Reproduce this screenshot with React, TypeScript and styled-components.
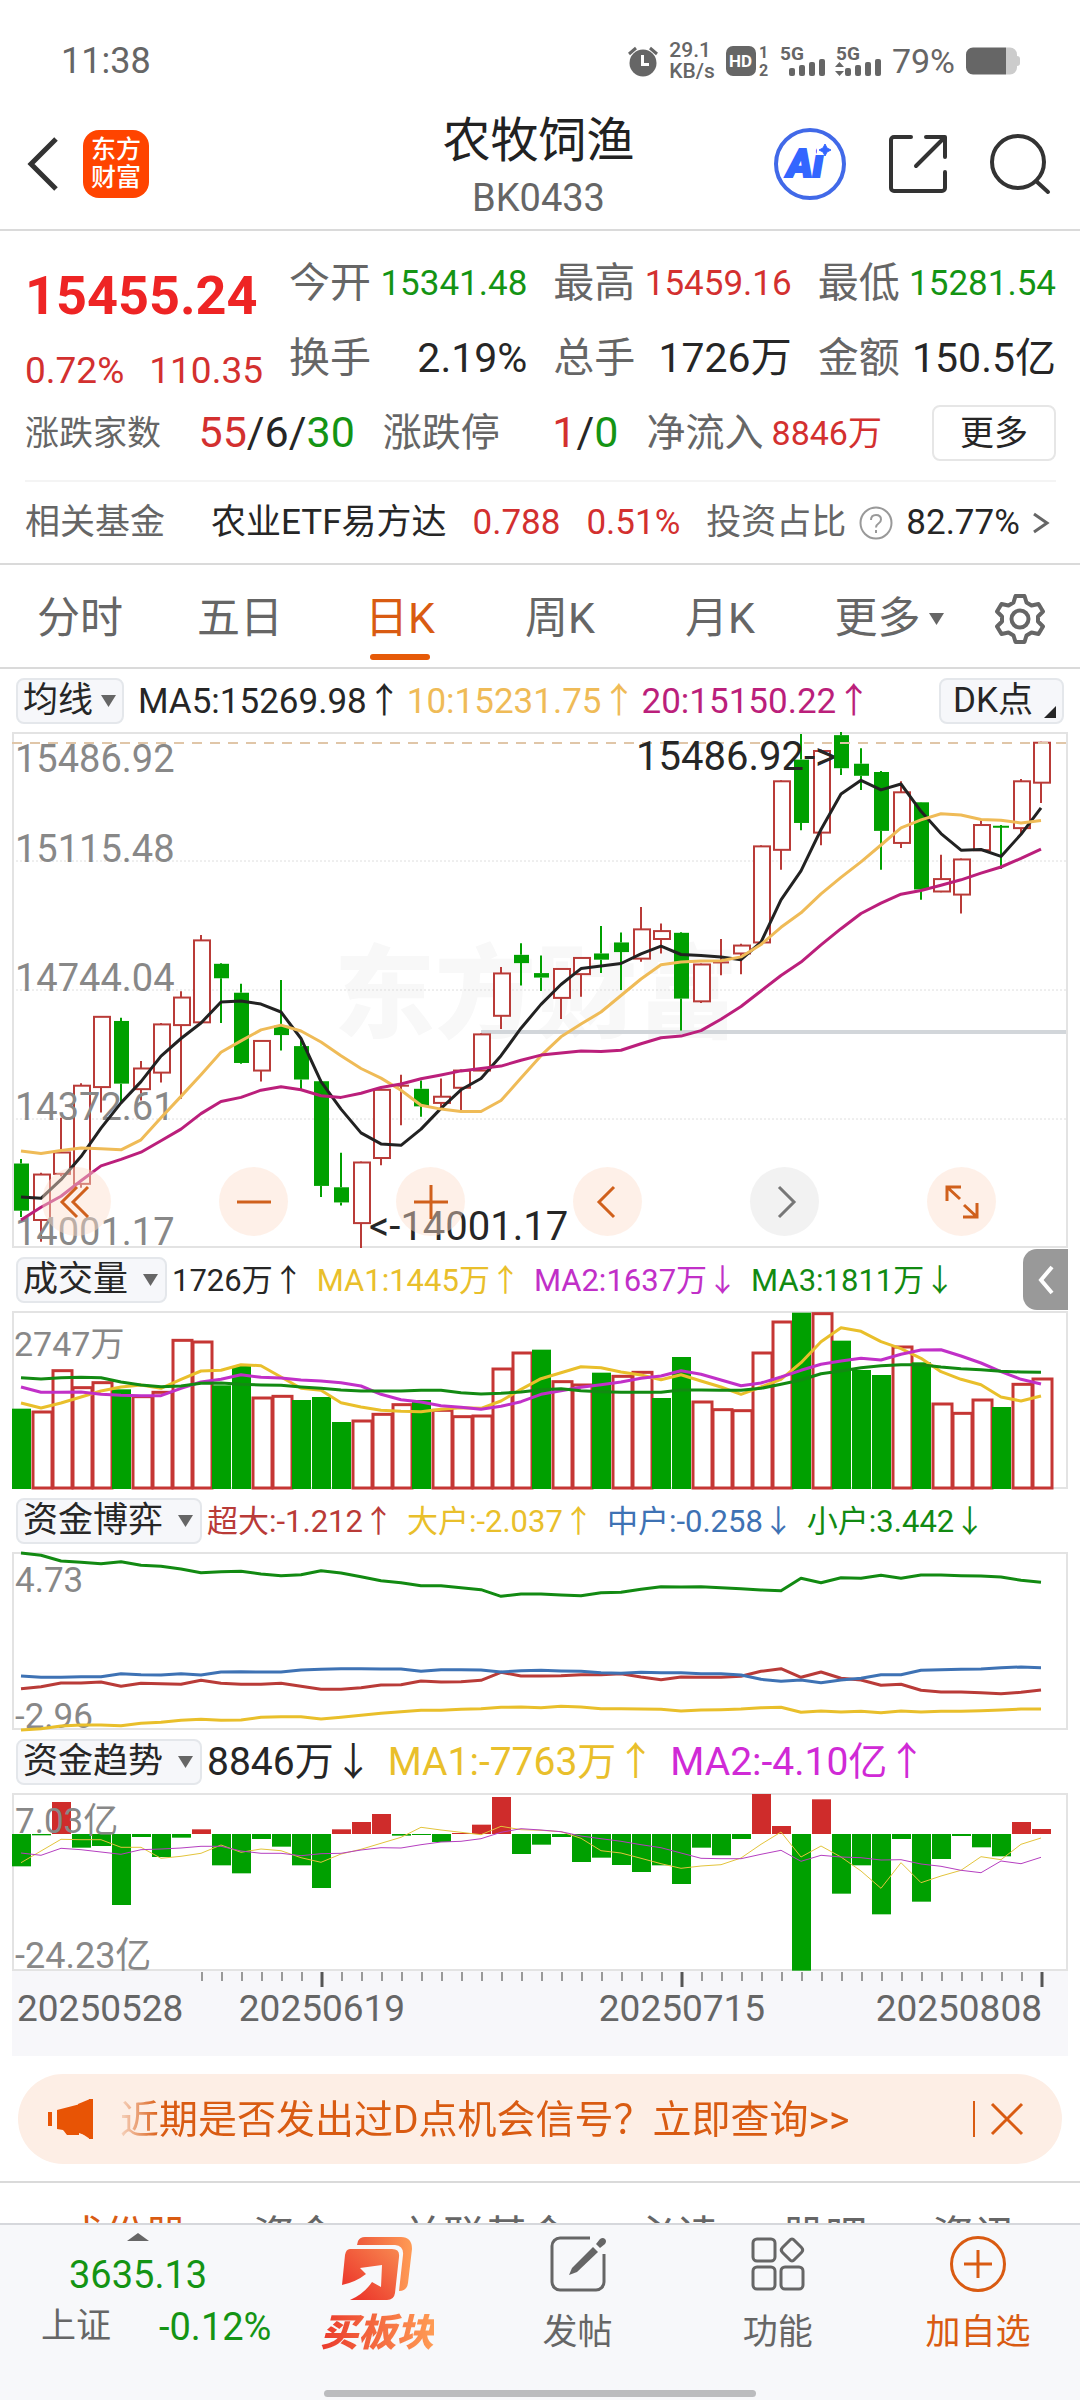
import React from "react";
import styled, { createGlobalStyle, css } from "styled-components";

const RED = "#d3302f";
const GREEN = "#149414";
const ORANGE = "#d95b12";
const GREY = "#666666";
const INK = "#262626";
const CANDLE_RED = "#b93b38";
const CANDLE_GREEN = "#00a000";

const FONT = 'Roboto, "Noto Sans CJK SC", sans-serif';

const GlobalStyle = createGlobalStyle`
  * { box-sizing: border-box; }
  body { margin: 0; background: #fff; font-family: ${FONT}; line-height: 1.2; color: ${INK}; }
  button, select { font-family: inherit; line-height: inherit; color: inherit; }
  button { border: 0; padding: 0; background: none; cursor: pointer; }
  h1, p, dl, dd, dt { margin: 0; font-weight: 400; }
  svg { display: block; flex: none; overflow: visible; }
`;

const Screen = styled.div`
  height: 100vh;
  display: flex;
  flex-direction: column;
  overflow: hidden;
`;

const Scroller = styled.main`
  flex: 1;
  min-height: 0;
  overflow: hidden;
`;

/* ---------- status bar ---------- */

const StatusBar = styled.div`
  display: flex;
  align-items: center;
  height: 84px;
  padding: 38px 60px 0 61px;
  color: ${GREY};
`;

const Clock = styled.span`
  flex: 1;
  font-size: 36px;
  line-height: 46px;
`;

const StatusIcons = styled.div`
  display: flex;
  align-items: center;
  gap: 11px;
`;

const NetSpeed = styled.span`
  display: grid;
  font-size: 21px;
  line-height: 21px;
  font-weight: 500;
`;

const Battery = styled.span`
  font-size: 34px;
  line-height: 46px;
`;

/* ---------- title bar ---------- */

const TitleBar = styled.header`
  display: grid;
  grid-template-columns: 1fr auto 1fr;
  align-items: center;
  height: 147px;
  padding: 14px 30px 0 27px;
  border-bottom: 2px solid #dadada;
`;

const BarSide = styled.div<{ $end?: boolean; $gap: number }>`
  display: flex;
  align-items: center;
  justify-content: ${(p) => (p.$end ? "flex-end" : "flex-start")};
  gap: ${(p) => p.$gap}px;
`;

const AppBadge = styled.a`
  display: grid;
  place-content: center;
  width: 66px;
  height: 68px;
  border-radius: 16px;
  background: #ff4400;
  color: #fff;
  font-size: 25px;
  line-height: 28px;
  font-weight: 500;
  text-decoration: none;
`;

const TitleBlock = styled.div`
  display: grid;
  justify-items: center;
  gap: 4px;
  padding-top: 2px;
`;

const Title = styled.h1`
  font-size: 48px;
  line-height: 62px;
  color: #222;
`;

const Code = styled.p`
  font-size: 38px;
  line-height: 44px;
  color: ${GREY};
`;

/* ---------- quote ---------- */

const Quote = styled.section`
  padding: 15px 24px 0 25px;
  border-bottom: 2px solid #dadada;
`;

const QuoteTop = styled.div`
  display: grid;
  grid-template-columns: 238px 1fr;
  column-gap: 26px;
`;

const Price = styled.p`
  font-size: 54px;
  line-height: 100px;
  font-weight: 700;
  color: #ee2424;
`;

const Change = styled.p`
  display: flex;
  justify-content: space-between;
  font-size: 37px;
  line-height: 50px;
  color: ${RED};
`;

const Metrics = styled.dl`
  display: grid;
  grid-template-columns: repeat(3, 1fr);
  grid-auto-rows: 75px;
  column-gap: 26px;
`;

const Breadth = styled.dl`
  display: grid;
  grid-template-columns: 7fr 5fr 5fr auto;
  column-gap: 28px;
  align-items: center;
  height: 74px;
`;

const Metric = styled.div`
  display: flex;
  align-items: center;
  justify-content: space-between;
  white-space: nowrap;
`;

const Label = styled.dt<{ $size: number }>`
  font-size: ${(p) => p.$size}px;
  color: ${GREY};
`;

const Value = styled.dd<{ $size: number; $color?: string }>`
  font-size: ${(p) => p.$size}px;
  color: ${(p) => p.$color ?? INK};
`;

const Tint = styled.span<{ $color: string }>`
  color: ${(p) => p.$color};
`;

const MoreButton = styled.button`
  width: 124px;
  height: 56px;
  margin-left: 22px;
  border: 2px solid #e6e6e6;
  border-radius: 8px;
  font-size: 34px;
`;

const FundRow = styled.div`
  display: flex;
  align-items: center;
  gap: 26px;
  height: 83px;
  margin-top: 10px;
  border-top: 2px solid #f4f4f4;
  font-size: 35px;
  white-space: nowrap;
`;

const FundGroup = styled.span<{ $gap: number; $color?: string; $push?: number }>`
  display: flex;
  align-items: center;
  gap: ${(p) => p.$gap}px;
  margin-right: ${(p) => p.$push ?? 0}px;
  color: ${(p) => p.$color ?? INK};
`;

/* ---------- period tabs ---------- */

const PeriodTabs = styled.nav`
  display: grid;
  grid-template-columns: repeat(6, 4fr) 3fr;
  height: 104px;
  border-bottom: 2px solid #dadada;
`;

const PeriodTab = styled.button<{ $active?: boolean; $more?: boolean }>`
  position: relative;
  display: flex;
  align-items: center;
  justify-content: center;
  gap: 8px;
  padding: 6px 0 0 ${(p) => (p.$more ? 18 : 0)}px;
  font-size: 43px;
  color: ${(p) => (p.$active ? ORANGE : GREY)};
  ${(p) =>
    p.$active &&
    css`
      &::after {
        content: "";
        position: absolute;
        left: 50%;
        bottom: 7px;
        width: 60px;
        height: 6px;
        margin-left: -30px;
        border-radius: 3px;
        background: #e65a08;
      }
    `}
`;

/* ---------- chart panels ---------- */

const Charts = styled.section`
  padding: 0 12px;
`;

const Legend = styled.div<{ $gap: number; $size: number }>`
  position: relative;
  display: flex;
  align-items: center;
  gap: ${(p) => p.$gap}px;
  height: 63px;
  padding: 0 4px;
  font-size: ${(p) => p.$size}px;
  white-space: nowrap;
`;

const Picker = styled.label<{ $wide?: boolean }>`
  position: relative;
  display: flex;
  align-items: center;
  svg {
    position: absolute;
    right: ${(p) => (p.$wide ? 9 : 8)}px;
    pointer-events: none;
  }
`;

const PickerSelect = styled.select<{ $wide?: boolean }>`
  appearance: none;
  height: 46px;
  margin: 0;
  padding: 0 ${(p) => (p.$wide ? 36 : 28)}px 0 5px;
  border: 2px solid #e4e7eb;
  border-radius: 8px;
  background: #f6f7fa;
  font-size: 35px;
  line-height: 42px;
`;

const LegendItems = styled.div<{ $gap: number }>`
  display: flex;
  flex: 1;
  gap: ${(p) => p.$gap}px;
  padding-top: 2px;
`;

const DkButton = styled.button`
  display: flex;
  align-items: center;
  gap: 11px;
  height: 46px;
  padding: 0 6px 0 12px;
  border: 2px solid #e4e7eb;
  border-radius: 8px;
  background: #f6f7fa;
  font-size: 35px;
  svg {
    align-self: flex-end;
    margin-bottom: 4px;
  }
`;

const Drawer = styled.button`
  position: absolute;
  right: 0;
  bottom: 1px;
  display: grid;
  place-items: center;
  width: 45px;
  height: 61px;
  border-radius: 14px 0 0 14px;
  background: #999;
`;

const Plot = styled.svg`
  width: 100%;
  height: auto;
  text {
    font-family: ${FONT};
  }
`;

const MainPlot = styled.div`
  position: relative;
`;

const Controls = styled.div`
  position: absolute;
  left: 30px;
  right: 72px;
  bottom: 12px;
  display: flex;
  justify-content: space-between;
`;

const RoundButton = styled.button<{ $muted?: boolean }>`
  display: grid;
  place-items: center;
  width: 69px;
  height: 69px;
  border-radius: 50%;
  background: ${(p) => (p.$muted ? "rgba(230, 230, 230, 0.5)" : "rgba(253, 222, 205, 0.45)")};
`;

/* ---------- notice ---------- */

const Notice = styled.aside`
  display: flex;
  align-items: center;
  height: 90px;
  margin: 18px 18px 17px;
  padding: 0 39px 0 30px;
  border-radius: 45px;
  background: #fdeee5;
  color: ${ORANGE};
`;

const NoticeLink = styled.a`
  flex: 1;
  margin-left: 18px;
  padding: 2px 0 0 8px;
  color: inherit;
  font-size: 39px;
  text-decoration: none;
  white-space: nowrap;
  overflow: hidden;
  mask-image: linear-gradient(to right, transparent, #000 48px);
`;

const NoticeClose = styled.button`
  display: flex;
  align-items: center;
  height: 36px;
  padding-left: 16px;
  border-left: 2px solid ${ORANGE};
`;

const SectionTabs = styled.nav`
  display: flex;
  justify-content: space-between;
  padding: 28px 64px 24px 62px;
  border-top: 2px solid #dadada;
`;

const SectionTab = styled.button<{ $active?: boolean }>`
  font-size: 42px;
  line-height: 52px;
  color: ${(p) => (p.$active ? ORANGE : GREY)};
`;

/* ---------- bottom bar ---------- */

const BottomBar = styled.footer`
  position: relative;
  flex: none;
  display: grid;
  grid-template-columns: 277fr repeat(4, 200fr);
  height: 177px;
  padding-right: 2px;
  border-top: 2px solid #d6d8dc;
  background: #f7f8fa;
`;

const IndexButton = styled.button`
  display: flex;
  flex-direction: column;
  align-items: flex-start;
  padding: 8px 0 0 41px;
  color: ${GREEN};
  font-size: 38px;
  line-height: 52px;
  svg {
    margin: 0 0 8px 86px;
  }
`;

const IndexValue = styled.span`
  margin-left: 28px;
`;

const IndexChange = styled.span`
  display: flex;
  gap: 48px;
`;

const IndexName = styled.span`
  color: ${GREY};
  font-size: 35px;
`;

const NavButton = styled.button<{ $color?: string }>`
  display: flex;
  flex-direction: column;
  align-items: center;
  padding-top: 11px;
  font-size: 35px;
  line-height: 48px;
  color: ${(p) => p.$color ?? GREY};
`;

const NavIcon = styled.span`
  height: 66px;
  margin-bottom: 7px;
`;

const BuyLabel = styled.span`
  font-size: 38px;
  font-weight: 900;
  font-style: italic;
  background: linear-gradient(to right, #ea3a2c, #ff9c54);
  background-clip: text;
  color: transparent;
`;

const HomeIndicator = styled.div`
  position: absolute;
  left: 30%;
  right: 30%;
  bottom: 3px;
  height: 7px;
  border-radius: 4px;
  background: #bbbcbe;
`;

/* ---------- data ---------- */

type Candle = [up: 0 | 1, high: number, top: number, bottom: number, low: number];

const CANDLES: Candle[] = [
  [0, 1275, 1288, 1425, 1443], [1, 1315, 1320, 1452, 1515], [1, 1155, 1256, 1318, 1325],
  [1, 1055, 1062, 1347, 1358], [1, 860, 862, 1066, 1140], [0, 865, 874, 1056, 1110],
  [1, 990, 1012, 1072, 1105], [1, 880, 884, 1024, 1053], [1, 788, 806, 886, 1100],
  [1, 624, 640, 878, 880], [0, 706, 708, 750, 880], [0, 766, 792, 996, 998],
  [1, 929, 932, 1018, 1050], [0, 755, 888, 915, 960], [0, 930, 947, 1044, 1072],
  [0, 1045, 1049, 1353, 1385], [0, 1257, 1357, 1401, 1410], [1, 1282, 1285, 1461, 1533],
  [1, 1070, 1074, 1272, 1293], [1, 1030, 1062, 1062, 1177], [0, 1047, 1071, 1122, 1152],
  [1, 1041, 1094, 1112, 1125], [1, 1015, 1018, 1068, 1133], [1, 910, 913, 1018, 1018],
  [1, 717, 736, 859, 897], [0, 648, 682, 706, 771], [0, 684, 735, 748, 787],
  [1, 720, 723, 807, 868], [1, 688, 691, 738, 804], [0, 598, 678, 696, 735],
  [0, 617, 646, 674, 784], [1, 543, 608, 693, 702], [1, 591, 613, 636, 678],
  [0, 616, 618, 809, 902], [1, 707, 710, 817, 822], [1, 636, 704, 704, 741],
  [1, 650, 655, 678, 738], [1, 364, 367, 646, 648], [1, 175, 178, 377, 435],
  [0, 41, 115, 299, 320], [1, 86, 90, 327, 364], [0, 35, 44, 140, 160],
  [0, 82, 127, 162, 203], [0, 148, 151, 322, 435], [1, 178, 210, 357, 372],
  [0, 238, 239, 492, 522], [1, 391, 462, 498, 500], [1, 402, 405, 507, 562],
  [1, 292, 305, 378, 380], [0, 305, 310, 310, 433], [1, 171, 178, 314, 332],
  [1, 63, 66, 182, 241],
];

const MA5 = [
  1385, 1389, 1335, 1268, 1185, 1112, 1050, 976, 925, 880, 819, 816, 825, 848, 925, 1050, 1130,
  1199, 1231, 1235, 1188, 1128, 1074, 1041, 975, 895, 826, 768, 722, 714, 707, 679, 657, 681,
  684, 688, 696, 645, 522, 438, 318, 215, 175, 203, 186, 265, 330, 378, 376, 396, 332, 255,
];
const MA10 = [
  1252, 1259, 1250, 1243, 1245, 1248, 1219, 1155, 1093, 1030, 965, 932, 900, 886, 903, 935, 975,
  1012, 1040, 1075, 1119, 1130, 1137, 1137, 1105, 1040, 975, 920, 883, 848, 800, 752, 711, 703,
  700, 699, 688, 652, 602, 560, 505, 457, 412, 363, 313, 290, 272, 276, 289, 291, 299, 292,
];
const MA20 = [
  1452, 1415, 1383, 1338, 1295, 1276, 1255, 1222, 1188, 1143, 1108, 1096, 1075, 1065, 1074, 1091,
  1096, 1084, 1067, 1057, 1042, 1031, 1019, 1012, 1005, 988, 973, 967, 961, 963, 959, 940, 923,
  918, 902, 869, 832, 787, 742, 703, 653, 606, 562, 532, 506, 495, 480, 464, 445, 427, 402, 375,
];

const VOLUME = [
  473, 480, 356, 407, 392, 415, 434, 421, 265, 270, 403, 345, 438, 433, 447, 438, 513, 507, 487,
  458, 447, 475, 494, 492, 351, 303, 296, 389, 399, 365, 373, 361, 441, 318, 450, 473, 476, 303,
  210, 185, 185, 269, 357, 372, 285, 334, 456, 484, 444, 468, 397, 381,
];
const VOLUME_DOWN = new Set([0, 5, 10, 11, 14, 15, 16, 20, 26, 29, 32, 33, 39, 41, 42, 43, 45, 49]);
const VOL_MA1 = [
  456, 471, 456, 438, 420, 408, 402, 412, 385, 360, 358, 341, 344, 378, 412, 418, 455, 468, 478,
  481, 482, 475, 470, 472, 450, 415, 383, 365, 347, 350, 363, 372, 386, 371, 390, 408, 430, 408,
  385, 335, 272, 230, 241, 272, 293, 322, 362, 385, 401, 438, 450, 435,
];
const VOL_MA2 = [
  408, 424, 424, 423, 430, 433, 434, 434, 412, 393, 385, 371, 379, 381, 387, 390, 395, 405, 430,
  446, 453, 464, 469, 475, 466, 452, 430, 419, 409, 401, 393, 382, 375, 359, 370, 387, 404, 396,
  378, 358, 340, 330, 322, 327, 310, 297, 296, 315, 336, 362, 385, 399,
];
const VOL_MA3 = [
  380, 384, 380, 379, 380, 393, 402, 407, 405, 397, 396, 400, 402, 403, 408, 412, 417, 420, 420,
  420, 418, 418, 425, 429, 427, 423, 416, 413, 419, 422, 424, 424, 424, 417, 417, 418, 418, 412,
  400, 387, 368, 360, 350, 344, 341, 341, 348, 353, 356, 361, 363, 364,
];

const FLOW_SMALL = [
  186, 193, 210, 214, 218, 212, 223, 226, 234, 245, 242, 241, 249, 254, 251, 239, 246, 257, 269,
  275, 284, 284, 290, 296, 316, 309, 309, 312, 314, 305, 304, 295, 287, 288, 287, 290, 293, 297,
  299, 262, 275, 260, 262, 253, 262, 252, 252, 254, 255, 258, 268, 274,
];
const FLOW_MEDIUM = [
  555, 559, 559, 557, 557, 548, 551, 552, 548, 552, 543, 542, 543, 543, 537, 535, 533, 533, 534,
  534, 541, 536, 536, 537, 543, 539, 538, 540, 541, 545, 547, 544, 545, 545, 548, 548, 552, 565,
  571, 567, 575, 567, 562, 551, 551, 538, 536, 535, 534, 530, 528, 530,
];
const FLOW_HUGE = [
  593, 587, 576, 576, 573, 586, 577, 578, 580, 568, 577, 580, 580, 577, 586, 595, 595, 590, 582,
  581, 570, 573, 572, 568, 544, 555, 555, 554, 551, 551, 548, 558, 566, 558, 559, 559, 556, 541,
  533, 559, 543, 562, 567, 583, 580, 598, 603, 603, 605, 608, 604, 597,
];
const FLOW_LARGE = [
  717, 713, 705, 702, 702, 704, 697, 694, 688, 685, 688, 687, 679, 677, 677, 684, 679, 673, 667,
  662, 658, 658, 655, 653, 649, 648, 650, 646, 648, 653, 653, 654, 655, 660, 657, 656, 654, 650,
  649, 664, 660, 663, 661, 665, 660, 663, 661, 661, 659, 657, 654, 654,
];

const TREND = [
  406, 313, 213, 350, 345, 522, 318, 378, 320, 295, 403, 427, 324, 347, 403, 471, 295, 273, 249,
  314, 312, 333, 306, 281, 198, 369, 341, 318, 393, 380, 402, 423, 403, 459, 350, 373, 324, 189,
  285, 719, 205, 488, 403, 550, 324, 512, 384, 315, 349, 376, 273, 294,
];
const TREND_MA1 = [
  395, 360, 325, 326, 326, 349, 349, 382, 376, 367, 342, 364, 354, 359, 380, 394, 369, 355, 337,
  319, 289, 297, 304, 311, 286, 296, 298, 302, 322, 359, 366, 382, 398, 412, 405, 401, 381, 340,
  303, 378, 345, 378, 420, 472, 395, 455, 435, 418, 377, 386, 340, 321,
];
const TREND_MA2 = [
  366, 373, 352, 356, 363, 370, 356, 354, 351, 346, 346, 360, 367, 367, 374, 368, 367, 357, 350,
  351, 341, 333, 331, 323, 304, 293, 297, 302, 315, 323, 331, 341, 350, 366, 382, 383, 383, 370,
  358, 391, 373, 378, 380, 387, 386, 399, 406, 418, 425, 390, 398, 379,
];
const TREND_ZERO = 309;

/* ---------- chart helpers ---------- */

const xOf = (i: number) => 9 + i * 20;
const priceY = (v: number) => v / 2.904 - 12;
const volumeY = (v: number) => v / 3 - 60;
const flowY = (v: number) => v / 3 - 61;
const trendY = (v: number) => v / 3 - 62;

type LineProps = { data: number[]; y: (v: number) => number; color: string; width?: number };

const Line = ({ data, y, color, width = 3 }: LineProps) => (
  <polyline
    points={data.map((v, i) => `${xOf(i)},${y(v).toFixed(1)}`).join(" ")}
    fill="none"
    stroke={color}
    strokeWidth={width}
    strokeLinejoin="round"
  />
);

const Frame = ({ height }: { height: number }) => (
  <rect x="1" y="1" width="1054" height={height - 2} fill="none" stroke="#e3e3e3" strokeWidth="2" />
);

const AxisText = ({ x = 3, y, size = 38, children }: { x?: number; y: number; size?: number; children: string }) => (
  <text x={x} y={y} fontSize={size} fill="#888">
    {children}
  </text>
);

const CandleChart = () => (
  <Plot viewBox="0 0 1056 516" role="img" aria-label="日K线">
    <text x="322" y="298" fontSize="101" fontWeight="900" fill="#f8f8f8">
      东方财富
    </text>
    {[129, 258, 387].map((y) => (
      <line key={y} x1="0" x2="1056" y1={y} y2={y} stroke="#dedede" strokeWidth="1" strokeDasharray="2 2" />
    ))}
    <Frame height={516} />
    <line x1="469" x2="1054" y1="300" y2="300" stroke="#d2d6da" strokeWidth="4" />
    {CANDLES.map(([up, high, top, bottom, low], i) => {
      const x = xOf(i);
      const color = up ? CANDLE_RED : CANDLE_GREEN;
      const t = priceY(top);
      const b = priceY(bottom);
      return (
        <g key={i} stroke={color} strokeWidth="2">
          <line x1={x} x2={x} y1={Math.max(priceY(high), 0)} y2={t} />
          <line x1={x} x2={x} y1={b} y2={priceY(low)} />
          {top === bottom ? (
            <line x1={x - 8} x2={x + 8} y1={t} y2={t} />
          ) : up ? (
            <rect x={x - 7} y={t} width="16" height={b - t} fill="#fff" />
          ) : (
            <rect x={x - 6} y={t + 1} width="13" height={Math.max(b - t - 2, 1)} fill={color} />
          )}
        </g>
      );
    })}
    <line x1="0" x2="1056" y1="11" y2="11" stroke="#e0c6a8" strokeWidth="2" strokeDasharray="10 8" />
    <AxisText y={40}>15486.92</AxisText>
    <AxisText y={130}>15115.48</AxisText>
    <AxisText y={259}>14744.04</AxisText>
    <AxisText y={388}>14372.61</AxisText>
    <AxisText y={513}>14001.17</AxisText>
    <text x="824" y="38" fontSize="40" fill={INK} textAnchor="end">
      {"15486.92->"}
    </text>
    <text x="357" y="508" fontSize="40" fill={INK}>
      {"<-14001.17"}
    </text>
    <Line data={MA5} y={priceY} color="#222" />
    <Line data={MA10} y={priceY} color="#efbb57" />
    <Line data={MA20} y={priceY} color="#bb1f7b" />
  </Plot>
);

const VolumeChart = () => (
  <Plot viewBox="0 0 1056 178" role="img" aria-label="成交量">
    <Frame height={178} />
    {VOLUME.map((v, i) => {
      const y = volumeY(v);
      return VOLUME_DOWN.has(i) ? (
        <rect key={i} x={xOf(i) - 9} y={y} width="19" height={178 - y} fill={CANDLE_GREEN} />
      ) : (
        <rect key={i} x={xOf(i) - 8} y={y + 1} width="19" height={176 - y} fill="#fff" stroke="#c53634" strokeWidth="3" />
      );
    })}
    <AxisText x={2} y={45} size={34}>2747万</AxisText>
    <Line data={VOL_MA1} y={volumeY} color="#e9bf2b" />
    <Line data={VOL_MA2} y={volumeY} color="#c130c8" />
    <Line data={VOL_MA3} y={volumeY} color="#128a12" />
  </Plot>
);

const FlowChart = () => (
  <Plot viewBox="0 0 1056 178" role="img" aria-label="资金博弈">
    <Frame height={178} />
    <AxisText y={40} size={35}>4.73</AxisText>
    <AxisText y={176} size={35}>-2.96</AxisText>
    <Line data={FLOW_LARGE} y={flowY} color="#e9bf2b" />
    <Line data={FLOW_HUGE} y={flowY} color="#b93b38" />
    <Line data={FLOW_MEDIUM} y={flowY} color="#3e72b4" />
    <Line data={FLOW_SMALL} y={flowY} color="#128a12" />
  </Plot>
);

const TrendChart = () => (
  <Plot viewBox="0 0 1056 178" role="img" aria-label="资金趋势">
    <Frame height={178} />
    {TREND.map((v, i) => (
      <rect
        key={i}
        x={xOf(i) - 9}
        y={trendY(Math.min(v, TREND_ZERO))}
        width="19"
        height={Math.abs(v - TREND_ZERO) / 3}
        fill={v < TREND_ZERO ? "#cf2c2b" : CANDLE_GREEN}
      />
    ))}
    <AxisText y={40} size={35}>7.03亿</AxisText>
    <AxisText y={175} size={36}>-24.23亿</AxisText>
    <Line data={TREND_MA1} y={trendY} color="#e3c43c" width={1} />
    <Line data={TREND_MA2} y={trendY} color="#b53fc0" width={1} />
  </Plot>
);

const MAJOR_TICKS = [15, 33, 51];

const DateAxis = () => (
  <Plot viewBox="0 0 1056 85" role="img" aria-label="日期">
    <rect width="1056" height="85" fill="#f7f7fa" />
    {Array.from({ length: 43 }, (_, k) => k + 9).map((i) => {
      const major = MAJOR_TICKS.includes(i);
      return (
        <line
          key={i}
          x1={xOf(i) + 1}
          x2={xOf(i) + 1}
          y1="1"
          y2={major ? 16 : 10}
          stroke={major ? "#555" : "#999"}
          strokeWidth={major ? 3 : 2}
        />
      );
    })}
    <g fontSize="37" fill={GREY}>
      <text x="5" y="50">20250528</text>
      <text x="310" y="50" textAnchor="middle">20250619</text>
      <text x="670" y="50" textAnchor="middle">20250715</text>
      <text x="1030" y="50" textAnchor="end">20250808</text>
    </g>
  </Plot>
);

/* ---------- icons ---------- */

const Caret = ({ up }: { up?: boolean }) => (
  <svg width={up ? 22 : 15} height={up ? 8 : 12} viewBox="0 0 15 12" preserveAspectRatio="none">
    <path d={up ? "M0 12 7.5 0 15 12z" : "M0 0h15L7.500 12z"} fill={GREY} />
  </svg>
);

const AlarmIcon = () => (
  <svg width="30" height="31" viewBox="0 0 30 31">
    <circle cx="15" cy="17" r="13.500" fill={GREY} />
    <path d="M1 8 8 2M29 8 22 2" stroke={GREY} strokeWidth="3" />
    <path d="M14.500 9v9.500H21" stroke="#fff" strokeWidth="3" fill="none" />
  </svg>
);

const HdIcon = () => (
  <svg width="43" height="32" viewBox="0 0 43 32">
    <rect x="0" y="1" width="30" height="30" rx="7" fill={GREY} />
    <g fontFamily={FONT} fontWeight="700">
      <text x="3" y="22" fontSize="17" fill="#fff">HD</text>
      <text x="33" y="13" fontSize="16" fill={GREY}>1</text>
      <text x="33" y="31" fontSize="16" fill={GREY}>2</text>
    </g>
  </svg>
);

const SignalIcon = ({ data }: { data?: boolean }) => (
  <svg width="45" height="32" viewBox="0 0 45 32">
    <text x="0" y="15" fontSize="19" fontWeight="700" fontFamily={FONT} fill={GREY}>5G</text>
    {[8, 11, 14, 17].map((h, i) => (
      <rect key={h} x={9 + i * 10} y={31 - h} width="6" height={h} rx="2" fill={GREY} />
    ))}
    {data && <path d="M-1 22 3.500 17 8 22zM-1 26h9l-4.500 5z" fill={GREY} />}
  </svg>
);

const BatteryIcon = () => (
  <svg width="54" height="28" viewBox="0 0 54 28">
    <path d="M40 0.500h4a7 7 0 0 1 7 7v1.500q3 0 3 3v4q0 3-3 3v1.500a7 7 0 0 1-7 7h-4z" fill="#ccc" />
    <path d="M40 0.500v27H7a7 7 0 0 1-7-7v-13a7 7 0 0 1 7-7z" fill={GREY} />
  </svg>
);

const BackIcon = () => (
  <svg width="32" height="56" viewBox="0 0 32 56" fill="none" stroke="#333" strokeWidth="5">
    <path d="M29 3 4 28 29 53" />
  </svg>
);

const AiIcon = () => (
  <svg width="72" height="72" viewBox="0 0 72 72">
    <circle cx="36" cy="36" r="34" fill="none" stroke="#4169e8" strokeWidth="4" />
    <text x="13" y="49" fontSize="39" fontWeight="900" fontStyle="italic" fontFamily={FONT} fill="#3366ff" stroke="#3366ff" strokeWidth="2">
      Ai
    </text>
    <path d="M43 15h15v12H43z" fill="#fff" />
    <path d="m51 16 2 4 4 2-4 2-2 4-2-4-4-2 4-2z" fill="#3366ff" stroke="#3366ff" strokeWidth="1" />
  </svg>
);

const ShareIcon = () => (
  <svg width="58" height="58" viewBox="0 0 58 58" fill="none" stroke="#333" strokeWidth="4" strokeLinecap="round">
    <path d="M22 2H5a3 3 0 0 0-3 3v48a3 3 0 0 0 3 3h48a3 3 0 0 0 3-3V37" />
    <path d="M37 2h19v20M55 3 27 31" strokeLinejoin="round" />
  </svg>
);

const SearchIcon = () => (
  <svg width="60" height="60" viewBox="0 0 60 60" fill="none" stroke="#333" strokeWidth="4" strokeLinecap="round">
    <circle cx="28" cy="28" r="26" />
    <path d="m46 47 12 11" />
  </svg>
);

const HelpIcon = () => (
  <svg width="34" height="34" viewBox="0 0 34 34">
    <circle cx="17" cy="17" r="15.500" fill="none" stroke="#999" strokeWidth="2" />
    <path d="M12 14q0-5 5-5t5 4.500q0 2.500-2.500 4T17 21.500M17 24v3" fill="none" stroke="#999" strokeWidth="2" />
  </svg>
);

const ChevronRight = () => (
  <svg width="17" height="22" viewBox="0 0 17 22" fill="none" stroke={GREY} strokeWidth="3">
    <path d="m1 2 13 9-13 9" />
  </svg>
);

const GearIcon = () => (
  <svg width="52" height="52" viewBox="0 0 52 52" fill="none" stroke={GREY} strokeWidth="4" strokeLinejoin="round">
    <path d="M21.500 3h9l2 6.500 5 3 7-1.500 4.500 7.500-5 5v5l5 5-4.500 7.500-7-1.500-5 3-2 6.500h-9l-2-6.500-5-3-7 1.500L3 33.500l5-5v-5l-5-5L7.500 11l7 1.500 5-3z" />
    <circle cx="26" cy="26" r="8.500" />
  </svg>
);

const ControlIcon = ({ d, color = "#d0601c" }: { d: string; color?: string }) => (
  <svg width="36" height="36" viewBox="0 0 36 36" fill="none" stroke={color} strokeWidth="3">
    <path d={d} />
  </svg>
);

const CONTROLS = [
  { name: "最左", d: "M18 3 3 18 18 33M29 3 14 18 29 33" },
  { name: "缩小", d: "M1 18h34" },
  { name: "放大", d: "M1 18h34M18 1v34" },
  { name: "向左", d: "M24 3 9 18 24 33" },
  { name: "向右", d: "M12 3 27 18 12 33", muted: true },
  { name: "全屏", d: "M17 3H3v14M3 3l13 12M19 33h14V19M33 33 20 21" },
];

const MegaphoneIcon = () => (
  <svg width="46" height="40" viewBox="0 0 46 40" fill="#e85405">
    <path d="M0 13h4v14H0zM9 11 40 3v34l-9-3v2H19q-3-4-4-5l-6-1zM41 0h4v40h-4z" />
    <path d="m30 5 12-5v40l-12-8z" />
  </svg>
);

const BuyIcon = () => (
  <svg width="72" height="66" viewBox="0 0 72 66">
    <defs>
      <linearGradient id="buy" x1="0" y1="1" x2="1" y2="0">
        <stop offset="0" stopColor="#ea2a25" />
        <stop offset="1" stopColor="#f88850" />
      </linearGradient>
      <linearGradient id="buyBack" x1="0" y1="0" x2="1" y2="0">
        <stop offset="0" stopColor="#ee5a3c" />
        <stop offset="1" stopColor="#ff9b55" />
      </linearGradient>
    </defs>
    <path d="M16 9 17 5q2-4 7-4h36q11 0 11 12l-4 34q-1 8-9 8l4-36q1-9-8-10z" fill="url(#buyBack)" />
    <path d="M9 13h42q8 0 7 8l-4 36q-1 7-8 7H9q14-6 22-18l9 5 1-22-22 3 6 6Q15 46 1 49L4 19q1-6 5-6z" fill="url(#buy)" />
  </svg>
);

const PostIcon = () => (
  <svg width="56" height="56" viewBox="0 0 56 56" fill="none" stroke={GREY} strokeWidth="3">
    <path d="M40 2H10a8 8 0 0 0-8 8v36a8 8 0 0 0 8 8h36a8 8 0 0 0 8-8V18" />
    <path d="M43 11 48 16 27 36 19 39 22 32z" fill={GREY} stroke="none" />
    <path d="m46 8 4-5q3-2 5 0t0 5l-5 4z" fill={GREY} stroke="none" />
  </svg>
);

const GridIcon = () => (
  <svg width="54" height="54" viewBox="0 0 54 54" fill="none" stroke={GREY} strokeWidth="3">
    <rect x="2" y="3" width="22" height="22" rx="4" />
    <rect x="2" y="31" width="22" height="22" rx="4" />
    <rect x="30" y="31" width="22" height="22" rx="4" />
    <path d="M38.500 4.500q2.500-3 5 0l7 7q2.500 2.500 0 5l-7 7q-2.500 3-5 0l-7-7q-2.500-2.500 0-5z" />
  </svg>
);

const PlusIcon = () => (
  <svg width="56" height="56" viewBox="0 0 56 56" fill="none" stroke={ORANGE} strokeWidth="3">
    <circle cx="28" cy="28" r="26.500" />
    <path d="M14 28h28M28 14v28" />
  </svg>
);

/* ---------- parts ---------- */

const IndicatorPicker = ({ name, wide }: { name: string; wide?: boolean }) => (
  <Picker $wide={wide}>
    <PickerSelect $wide={wide} aria-label={`指标 ${name}`} defaultValue={name}>
      <option>{name}</option>
    </PickerSelect>
    <Caret />
  </Picker>
);

const METRICS: [string, string, number, string?][] = [
  ["今开", "15341.48", 35, GREEN],
  ["最高", "15459.16", 35, RED],
  ["最低", "15281.54", 35, GREEN],
  ["换手", "2.19%", 41],
  ["总手", "1726万", 41],
  ["金额", "150.5亿", 41],
];

export default function App() {
  return (
    <Screen>
      <GlobalStyle />
      <Scroller>
        <StatusBar>
          <Clock>11:38</Clock>
          <StatusIcons>
            <AlarmIcon />
            <NetSpeed>
              <span>29.1</span>
              <span>KB/s</span>
            </NetSpeed>
            <HdIcon />
            <SignalIcon />
            <SignalIcon data />
            <Battery>79%</Battery>
            <BatteryIcon />
          </StatusIcons>
        </StatusBar>

        <TitleBar>
          <BarSide $gap={24}>
            <button aria-label="返回">
              <BackIcon />
            </button>
            <AppBadge href="#home">
              <span>东方</span>
              <span>财富</span>
            </AppBadge>
          </BarSide>
          <TitleBlock>
            <Title>农牧饲渔</Title>
            <Code>BK0433</Code>
          </TitleBlock>
          <BarSide $end $gap={43}>
            <button aria-label="智能助手">
              <AiIcon />
            </button>
            <button aria-label="分享">
              <ShareIcon />
            </button>
            <button aria-label="搜索">
              <SearchIcon />
            </button>
          </BarSide>
        </TitleBar>

        <Quote>
          <QuoteTop>
            <div>
              <Price>15455.24</Price>
              <Change>
                <span>0.72%</span>
                <span>110.35</span>
              </Change>
            </div>
            <Metrics>
              {METRICS.map(([label, value, size, color]) => (
                <Metric key={label}>
                  <Label $size={41}>{label}</Label>
                  <Value $size={size} $color={color}>{value}</Value>
                </Metric>
              ))}
            </Metrics>
          </QuoteTop>
          <Breadth>
            <Metric>
              <Label $size={34}>涨跌家数</Label>
              <Value $size={43}>
                <Tint $color={RED}>55</Tint>/6/<Tint $color={GREEN}>30</Tint>
              </Value>
            </Metric>
            <Metric>
              <Label $size={39}>涨跌停</Label>
              <Value $size={43}>
                <Tint $color={RED}>1</Tint>/<Tint $color={GREEN}>0</Tint>
              </Value>
            </Metric>
            <Metric>
              <Label $size={39}>净流入</Label>
              <Value $size={34} $color={RED}>8846万</Value>
            </Metric>
            <MoreButton>更多</MoreButton>
          </Breadth>
          <FundRow>
            <FundGroup $gap={0} $color={GREY} $push={20}>相关基金</FundGroup>
            <FundGroup $gap={0}>农业ETF易方达</FundGroup>
            <FundGroup $gap={26} $color={RED}>
              <span>0.788</span>
              <span>0.51%</span>
            </FundGroup>
            <FundGroup $gap={13}>
              <Tint $color={GREY}>投资占比</Tint>
              <HelpIcon />
              <span>82.77%</span>
              <ChevronRight />
            </FundGroup>
          </FundRow>
        </Quote>

        <PeriodTabs>
          <PeriodTab>分时</PeriodTab>
          <PeriodTab>五日</PeriodTab>
          <PeriodTab $active>日K</PeriodTab>
          <PeriodTab>周K</PeriodTab>
          <PeriodTab>月K</PeriodTab>
          <PeriodTab $more>
            更多
            <Caret />
          </PeriodTab>
          <PeriodTab aria-label="设置">
            <GearIcon />
          </PeriodTab>
        </PeriodTabs>

        <Charts>
          <Legend $gap={14} $size={35}>
            <IndicatorPicker name="均线" />
            <LegendItems $gap={5}>
              <span>MA5:15269.98↑</span>
              <Tint $color="#efbb57">10:15231.75↑</Tint>
              <Tint $color="#bb1f7b">20:15150.22↑</Tint>
            </LegendItems>
            <DkButton>
              DK点
              <svg width="12" height="12" viewBox="0 0 12 12">
                <path d="M12 0v12H0z" fill={INK} />
              </svg>
            </DkButton>
          </Legend>
          <MainPlot>
            <CandleChart />
            <Controls>
              {CONTROLS.map(({ name, d, muted }) => (
                <RoundButton key={name} aria-label={name} $muted={muted}>
                  <ControlIcon d={d} color={muted ? "#777" : undefined} />
                </RoundButton>
              ))}
            </Controls>
          </MainPlot>

          <Legend $gap={5} $size={31}>
            <IndicatorPicker name="成交量" wide />
            <LegendItems $gap={13}>
              <span>1726万↑</span>
              <Tint $color="#e9bf2b">MA1:1445万↑</Tint>
              <Tint $color="#c130c8">MA2:1637万↓</Tint>
              <Tint $color="#128a12">MA3:1811万↓</Tint>
            </LegendItems>
            <Drawer aria-label="展开侧栏">
              <svg width="16" height="30" viewBox="0 0 16 30" fill="none" stroke="#fff" strokeWidth="4">
                <path d="M14 2 3 15l11 13" />
              </svg>
            </Drawer>
          </Legend>
          <VolumeChart />

          <Legend $gap={5} $size={31}>
            <IndicatorPicker name="资金博弈" wide />
            <LegendItems $gap={13}>
              <Tint $color="#b93b38">超大:-1.212↑</Tint>
              <Tint $color="#e9bf2b">大户:-2.037↑</Tint>
              <Tint $color="#3e72b4">中户:-0.258↓</Tint>
              <Tint $color="#128a12">小户:3.442↓</Tint>
            </LegendItems>
          </Legend>
          <FlowChart />

          <Legend $gap={5} $size={39}>
            <IndicatorPicker name="资金趋势" wide />
            <LegendItems $gap={15}>
              <span>8846万↓</span>
              <Tint $color="#e9bf2b">MA1:-7763万↑</Tint>
              <Tint $color="#d02ad6">MA2:-4.10亿↑</Tint>
            </LegendItems>
          </Legend>
          <TrendChart />
          <DateAxis />
        </Charts>

        <Notice>
          <MegaphoneIcon />
          <NoticeLink href="#signal">近期是否发出过D点机会信号？立即查询&gt;&gt;</NoticeLink>
          <NoticeClose aria-label="关闭">
            <svg width="32" height="32" viewBox="0 0 32 32" stroke={ORANGE} strokeWidth="3">
              <path d="m1 1 30 30M31 1 1 31" />
            </svg>
          </NoticeClose>
        </Notice>

        <SectionTabs>
          <SectionTab $active>成份股</SectionTab>
          <SectionTab>资金</SectionTab>
          <SectionTab>关联基金</SectionTab>
          <SectionTab>必读</SectionTab>
          <SectionTab>股吧</SectionTab>
          <SectionTab>资讯</SectionTab>
        </SectionTabs>
      </Scroller>

      <BottomBar>
        <IndexButton>
          <Caret up />
          <IndexValue>3635.13</IndexValue>
          <IndexChange>
            <IndexName>上证</IndexName>
            <span>-0.12%</span>
          </IndexChange>
        </IndexButton>
        <NavButton>
          <NavIcon><BuyIcon /></NavIcon>
          <BuyLabel>买板块</BuyLabel>
        </NavButton>
        <NavButton>
          <NavIcon><PostIcon /></NavIcon>
          发帖
        </NavButton>
        <NavButton>
          <NavIcon><GridIcon /></NavIcon>
          功能
        </NavButton>
        <NavButton $color={ORANGE}>
          <NavIcon><PlusIcon /></NavIcon>
          加自选
        </NavButton>
        <HomeIndicator />
      </BottomBar>
    </Screen>
  );
}
